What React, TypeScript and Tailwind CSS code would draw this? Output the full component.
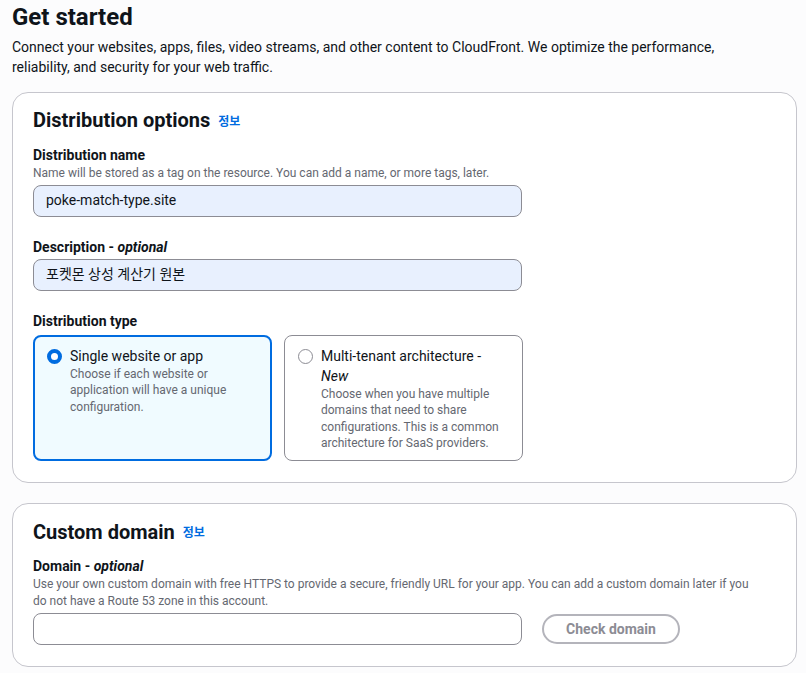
import { useState } from 'react';

const font = { fontFamily: 'Roboto, "Noto Sans CJK KR", sans-serif' };

function InfoLink() {
    return <span className="ml-2 text-[12px] font-bold text-[#006ce0] align-middle">정보</span>;
}

function Field({ label, optional, hint, children }: { label: string; optional?: boolean; hint?: React.ReactNode; children: React.ReactNode }) {
    return (
        <div>
            <div className="text-[14px] font-bold leading-[20px] text-[#0f141a]">
                {label}
                {optional && <> - <i>optional</i></>}
            </div>
            {hint && <div className="text-[12px] leading-[17px] text-[#656871]">{hint}</div>}
            <div className={hint ? 'mt-[3px]' : 'mt-[2px]'}>{children}</div>
        </div>
    );
}

function Tile({ title, desc, selected, onClick }: { title: React.ReactNode; desc: string; selected: boolean; onClick: () => void }) {
    return (
        <div
            onClick={onClick}
            className={`h-[126px] w-[239px] rounded-[8px] cursor-pointer ${selected
                ? 'border-2 border-[#006ce0] bg-[#f0fbff] px-[12px] pt-[9px]'
                : 'border border-[#8c8c94] bg-white px-[13px] pt-[10px]'}`}
        >
            <div className="flex gap-[8px]">
                <div className="pt-[3px]">
                    {selected ? (
                        <div className="h-[15px] w-[15px] rounded-full border-[4px] border-[#006ce0] bg-white" />
                    ) : (
                        <div className="h-[15px] w-[15px] rounded-full border border-[#8c8c94] bg-white" />
                    )}
                </div>
                <div>
                    <div className="text-[14px] leading-[20px] text-[#0f141a]">{title}</div>
                    <div className="text-[12px] leading-[16.5px] text-[#656871]">{desc}</div>
                </div>
            </div>
        </div>
    );
}

export default function App() {
    const [type, setType] = useState<'single' | 'multi'>('single');

    return (
        <div className="min-h-screen bg-[#fcfcfd] pl-[12px] pr-[9px] pt-[2px]" style={font}>
            <h1 className="text-[24px] font-bold leading-[30px] text-[#0f141a]">Get started</h1>
            <p className="mt-[5px] text-[14px] leading-[20px] text-[#0f141a] pr-[72px]">
                Connect your websites, apps, files, video streams, and other content to CloudFront. We optimize the performance,
                reliability, and security for your web traffic.
            </p>

            {/* Distribution options */}
            <section className="mt-[15px] rounded-[16px] border border-[#c6c6cd] bg-white px-[20px] pt-[13px] pb-[21px]">
                <h2 className="text-[20px] font-bold leading-[28px] text-[#0f141a]">
                    Distribution options<InfoLink />
                </h2>
                <div className="mt-[9px] flex flex-col gap-[20px]">
                    <Field label="Distribution name" hint="Name will be stored as a tag on the resource. You can add a name, or more tags, later.">
                        <div className="flex h-[32px] w-[489px] items-center rounded-[8px] border border-[#8c8c94] bg-[#e8f0fe] px-[12px] text-[14px] text-[#0f141a]">
                            poke-match-type.site
                        </div>
                    </Field>
                    <Field label="Description" optional>
                        <div className="flex h-[32px] w-[489px] items-center rounded-[8px] border border-[#8c8c94] bg-[#e8f0fe] px-[12px] text-[14px] text-[#0f141a]">
                            포켓몬 상성 계산기 원본
                        </div>
                    </Field>
                    <div>
                        <div className="text-[14px] font-bold leading-[20px] text-[#0f141a]">Distribution type</div>
                        <div className="mt-[4px] flex gap-[12px]">
                            <Tile
                                title="Single website or app"
                                desc="Choose if each website or application will have a unique configuration."
                                selected={type === 'single'}
                                onClick={() => setType('single')}
                            />
                            <Tile
                                title={<>Multi-tenant architecture - <i>New</i></>}
                                desc="Choose when you have multiple domains that need to share configurations. This is a common architecture for SaaS providers."
                                selected={type === 'multi'}
                                onClick={() => setType('multi')}
                            />
                        </div>
                    </div>
                </div>
            </section>

            {/* Custom domain */}
            <section className="mt-[20px] rounded-[16px] border border-[#c6c6cd] bg-white px-[20px] pt-[14px] pb-[21px]">
                <h2 className="text-[20px] font-bold leading-[28px] text-[#0f141a]">
                    Custom domain<InfoLink />
                </h2>
                <div className="mt-[9px]">
                    <Field
                        label="Domain"
                        optional
                        hint={<>Use your own custom domain with free HTTPS to provide a secure, friendly URL for your app. You can add a custom domain later if you<br />do not have a Route 53 zone in this account.</>}
                    >
                        <div className="flex items-center gap-[20px]">
                            <div className="h-[32px] w-[489px] rounded-[8px] border border-[#8c8c94] bg-white" />
                            <button className="h-[30px] w-[138px] rounded-full border-2 border-[#b4b4bb] text-[14px] font-bold text-[#8c8c94]">
                                Check domain
                            </button>
                        </div>
                    </Field>
                </div>
            </section>
        </div>
    );
}
